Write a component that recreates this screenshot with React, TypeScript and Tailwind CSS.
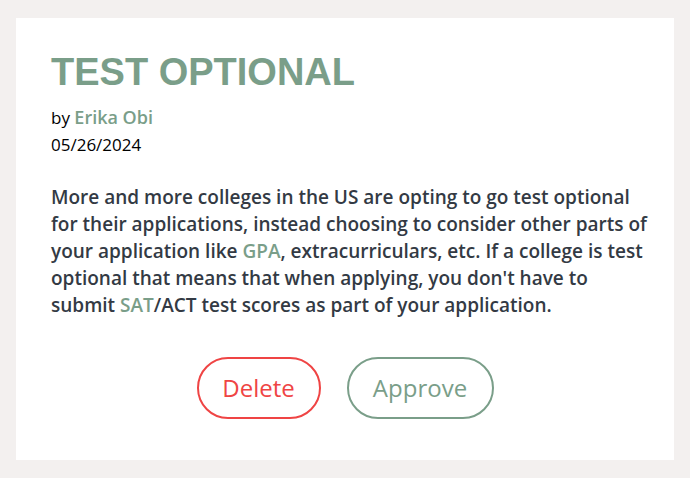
export default function App() {
  return (
    <div className="min-h-[478px] w-[690px] bg-[#f3f0ef] pt-[18px] pb-[18px] px-4">
      <div className="bg-white px-[35px] pt-[32px] pb-[41px] font-['Open_Sans',sans-serif]">
        <h1 className="font-['Liberation_Sans',Arial,sans-serif] text-[38px] font-bold leading-[44px] text-[#7a9e89]">
          TEST OPTIONAL
        </h1>
        <div className="mt-[10px] text-[17px] leading-[27px] text-black">
          by <span className="text-[18px] font-semibold text-[#7a9e89]">Erika Obi</span>
        </div>
        <div className="text-[17px] leading-[27px] text-black">05/26/2024</div>
        <p className="mt-[26px] w-[602px] text-[19px] font-semibold leading-[27px] text-[#333a44]">
          More and more colleges in the US are opting to go test optional for their applications, instead choosing to
          consider other parts of your application like <span className="text-[#7a9e89]">GPA</span>, extracurriculars,
          etc. If a college is test optional that means that when applying, you don't have to submit{' '}
          <span className="text-[#7a9e89]">SAT</span>/ACT test scores as part of your application.
        </p>
        <div className="mt-[38px] flex justify-center gap-[26px]">
          <button className="h-[62px] w-[124px] rounded-full border-2 border-[#ef4444] text-[24px] text-[#ef4444]">
            Delete
          </button>
          <button className="h-[62px] w-[147px] rounded-full border-2 border-[#7a9e89] text-[24px] text-[#7a9e89]">
            Approve
          </button>
        </div>
      </div>
    </div>
  )
}
